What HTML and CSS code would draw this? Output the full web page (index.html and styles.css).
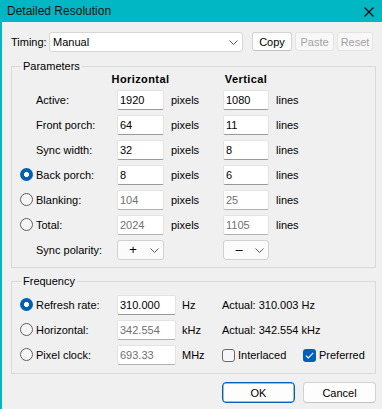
FILE: index.html
```html
<!DOCTYPE html>
<html>
<head>
<meta charset="utf-8">
<link rel="stylesheet" href="styles.css">
</head>
<body>
<div class="window">
  <div class="titlebar">
    <span class="title">Detailed Resolution</span>
    <svg class="close" width="10" height="10" viewBox="0 0 10 10"><path d="M0.5 0.5 L9.5 9.5 M9.5 0.5 L0.5 9.5" stroke="#000" stroke-width="1.1" fill="none"/></svg>
  </div>
  <div class="content">
    <div class="timing-row">
      <span class="timing-label">Timing:</span>
      <div class="combo timing-combo"><span>Manual</span><svg class="chev" width="9" height="5" viewBox="0 0 9 5"><path d="M0.5 0.5 L4.5 4.5 L8.5 0.5" stroke="#5c5c5c" fill="none"/></svg></div>
      <button class="btn copy">Copy</button>
      <button class="btn paste disabled">Paste</button>
      <button class="btn reset disabled">Reset</button>
    </div>

    <div class="group params">
      <span class="group-title">Parameters</span>
      <div class="pgrid">
        <span></span><span></span>
        <span class="hdr">Horizontal</span>
        <span></span>
        <span class="hdr">Vertical</span>
        <span></span>

        <span class="lbl">Active:</span>
        <div class="field">1920</div><span class="unit">pixels</span>
        <div class="field">1080</div><span class="unit">lines</span>

        <span class="lbl">Front porch:</span>
        <div class="field">64</div><span class="unit">pixels</span>
        <div class="field">11</div><span class="unit">lines</span>

        <span class="lbl">Sync width:</span>
        <div class="field">32</div><span class="unit">pixels</span>
        <div class="field">8</div><span class="unit">lines</span>

        <span class="radio checked"></span><span class="lbl">Back porch:</span>
        <div class="field">8</div><span class="unit">pixels</span>
        <div class="field">6</div><span class="unit">lines</span>

        <span class="radio"></span><span class="lbl">Blanking:</span>
        <div class="field dis">104</div><span class="unit">pixels</span>
        <div class="field dis">25</div><span class="unit">lines</span>

        <span class="radio"></span><span class="lbl">Total:</span>
        <div class="field dis">2024</div><span class="unit">pixels</span>
        <div class="field dis">1105</div><span class="unit">lines</span>

        <span class="lbl">Sync polarity:</span>
        <div class="combo pol"><span class="sym">+</span><svg class="chev" width="9" height="5" viewBox="0 0 9 5"><path d="M0.5 0.5 L4.5 4.5 L8.5 0.5" stroke="#5c5c5c" fill="none"/></svg></div>
        <span></span>
        <div class="combo pol"><span class="sym">–</span><svg class="chev" width="9" height="5" viewBox="0 0 9 5"><path d="M0.5 0.5 L4.5 4.5 L8.5 0.5" stroke="#5c5c5c" fill="none"/></svg></div>
      </div>
    </div>

    <div class="group freq">
      <span class="group-title">Frequency</span>
      <div class="fgrid">
        <span class="radio checked"></span><span class="lbl">Refresh rate:</span>
        <div class="field">310.000</div><span class="unit">Hz</span>
        <span class="actual">Actual: 310.003 Hz</span>

        <span class="radio"></span><span class="lbl">Horizontal:</span>
        <div class="field dis">342.554</div><span class="unit">kHz</span>
        <span class="actual">Actual: 342.554 kHz</span>

        <span class="radio"></span><span class="lbl">Pixel clock:</span>
        <div class="field dis">693.33</div><span class="unit">MHz</span>
        <span class="check-item"><span class="checkbox"></span>Interlaced</span>
        <span class="check-item"><span class="checkbox checked"><svg width="9" height="7" viewBox="0 0 9 7"><path d="M0.8 3.6 L3.3 6 L8.2 0.9" stroke="#ffffff" stroke-width="1.1" fill="none"/></svg></span>Preferred</span>
      </div>
    </div>

    <div class="actions">
      <button class="btn dlg default">OK</button>
      <button class="btn dlg">Cancel</button>
    </div>
  </div>
</div>
</body>
</html>
```

FILE: styles.css
```css
* { box-sizing: border-box; }
html, body { margin: 0; padding: 0; }
body {
  font-family: "Liberation Sans", Arial, sans-serif;
  font-size: 11px;
  color: #000;
  background: #f0f0f0;
}
.window {
  width: 382px;
  height: 409px;
  background: #f0f0f0;
  border-left: 2px solid #00b7c3;
  overflow: hidden;
}
.titlebar {
  height: 22px;
  background: #00b7c3;
  display: flex;
  align-items: center;
  justify-content: space-between;
  padding: 0 8px 0 5px;
}
.title { font-size: 12px; color: #111; line-height: 22px; }
.close { display: block; margin-top: 1px; }

.content { padding: 10px 6px 0 9px; }

.timing-row {
  display: flex;
  align-items: flex-start;
  height: 20px;
}
.timing-label { width: 38px; line-height: 20px; }
.combo {
  display: flex;
  align-items: center;
  justify-content: space-between;
  background: #fff;
  border: 1px solid #d6d6d6;
  border-radius: 3px;
}
.timing-combo {
  width: 194px;
  height: 20px;
  padding: 0 4px 0 3px;
  margin-right: 9px;
}
.chev { display: block; }
.btn {
  font-family: inherit;
  font-size: 11px;
  margin: 0;
  padding: 0;
  background: #fdfdfd;
  border: 1px solid #d3d3d3;
  border-bottom-color: #c2c2c2;
  border-radius: 3px;
  color: #000;
}
.copy, .paste, .reset { height: 19px; }
.copy { width: 40px; margin-right: 3px; }
.paste { width: 39px; margin-right: 3px; }
.reset { width: 36px; }
.btn.disabled {
  background: #f8f8f8;
  border-color: #e4e4e4;
  color: #a2a2a2;
}

.group {
  border: 1px solid #d9d9d9;
  padding-left: 8px;
}
.group-title {
  display: block;
  width: max-content;
  margin: -7px 0 0 1px;
  padding: 0 2px;
  line-height: 13px;
  background: #f0f0f0;
}
.params { margin-top: 14px; padding-bottom: 7px; }
.freq { margin-top: 13px; padding-bottom: 8px; }

.pgrid {
  display: grid;
  grid-template-columns: 16px 81px 47px 59px 46px 1fr;
  grid-template-rows: 13px repeat(7, 20px);
  row-gap: 5px;
  align-items: center;
  margin-top: -1px;
}
.pgrid .hdr {
  font-weight: bold;
  letter-spacing: 0.4px;
  line-height: 13px;
  display: flex;
  justify-content: center;
  margin: 0 -14px -1px;
}
.pgrid .lbl { grid-column: 2; }

.fgrid {
  display: grid;
  grid-template-columns: 16px 81px 59px 46px 81px 1fr;
  grid-template-rows: repeat(3, 20px);
  row-gap: 5px;
  align-items: center;
  margin-top: 7px;
}
.fgrid .actual { grid-column: 5 / span 2; }

.field {
  height: 20px;
  background: #fff;
  border: 1px solid #e3e3e3;
  border-bottom-color: #999;
  border-radius: 2px;
  padding-left: 2px;
  line-height: 18px;
}
.field.dis { color: #707070; border-bottom-color: #b0b0b0; }
.unit { padding-left: 7px; }
.fgrid .unit { padding-left: 6px; }

.radio {
  width: 13px;
  height: 13px;
  border-radius: 50%;
  border: 1px solid #5f5f5f;
  background: #f6f6f6;
  margin-top: -1px;
}
.radio.checked {
  border: none;
  background: radial-gradient(circle, #fff 0 2.3px, #005fb8 2.8px);
}

.pol {
  height: 20px;
  padding-right: 4px;
  border-color: #d0d0d0;
  background: #fbfbfb;
}
.sym {
  width: 30px;
  text-align: center;
  font-size: 13px;
  line-height: 18px;
}

.check-item {
  display: flex;
  align-items: center;
  gap: 3px;
}
.checkbox {
  width: 13px;
  height: 13px;
  border: 1px solid #6a6a6a;
  border-radius: 3px;
  background: #f6f6f6;
  display: flex;
  align-items: center;
  justify-content: center;
}
.checkbox.checked { border: none; background: #005fb8; }
.checkbox svg { display: block; }

.actions {
  display: flex;
  justify-content: flex-end;
  gap: 8px;
  margin-top: 8px;
}
.dlg {
  width: 73px;
  height: 21px;
  border-radius: 4px;
}
.dlg.default {
  border: 1px solid #0063b8;
  box-shadow: inset 0 0 0 0.5px #2d7fce;
}
```
